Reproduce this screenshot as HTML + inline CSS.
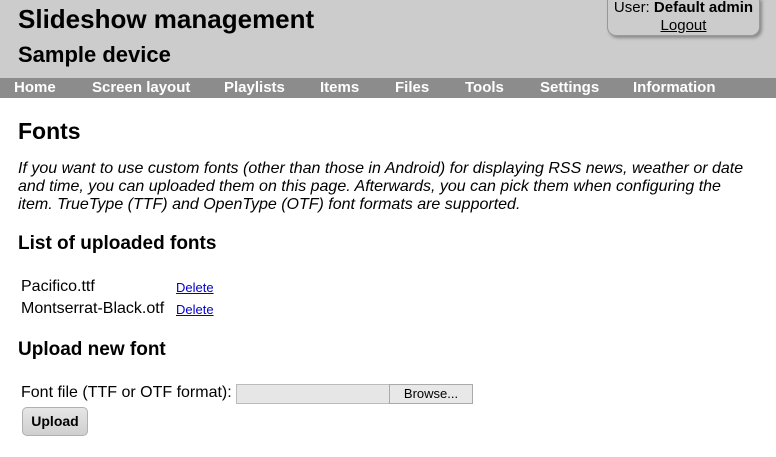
<!DOCTYPE html><html><head><style>
body{margin:0;width:776px;height:457px;overflow:hidden;background:#fff;font-family:"Liberation Sans",Arial,sans-serif;color:#000;position:relative}
.a{position:absolute;white-space:nowrap}
#hdr{position:absolute;left:0;top:0;width:776px;height:78px;background:#ccc}
#nav{position:absolute;left:0;top:78px;width:776px;height:20px;background:#8c8c8c}
#nav span{position:absolute;top:1px;color:#fff;font-weight:bold;font-size:15px;line-height:18px}
#user{position:absolute;left:607px;top:-2px;width:151px;height:37px;background:#ccc;border:1px solid #999;border-top:none;border-radius:0 0 9px 9px;box-shadow:2px 2px 3px #888;text-align:center;font-size:15px;line-height:18px}
p{margin:0}
</style></head><body>
<div id="hdr"></div>
<div class="a" style="left:18px;top:4px;font-size:26px;font-weight:bold">Slideshow management</div>
<div class="a" style="left:18px;top:42px;font-size:22px;font-weight:bold">Sample device</div>
<div id="user"><div style="margin-top:1px">User: <b>Default admin</b></div><div style="text-decoration:underline">Logout</div></div>
<div id="nav">
<span style="left:14px">Home</span><span style="left:92px">Screen layout</span><span style="left:224px">Playlists</span><span style="left:320px">Items</span><span style="left:395px">Files</span><span style="left:465px">Tools</span><span style="left:540px">Settings</span><span style="left:633px">Information</span>
</div>
<div class="a" style="left:18px;top:118px;font-size:23px;font-weight:bold">Fonts</div>
<div class="a" style="left:18px;top:160px;font-size:16px;font-style:italic;line-height:18px;width:730px;white-space:normal">If you want to use custom fonts (other than those in Android) for displaying RSS news, weather or date and time, you can uploaded them on this page. Afterwards, you can pick them when configuring the item. TrueType (TTF) and OpenType (OTF) font formats are supported.</div>
<div class="a" style="left:18px;top:233px;font-size:19px;font-weight:bold">List of uploaded fonts</div>
<div class="a" style="left:21px;top:278px;font-size:16px">Pacifico.ttf</div>
<div class="a" style="left:176px;top:280px;font-size:13px;color:#00c;text-decoration:underline">Delete</div>
<div class="a" style="left:21px;top:300px;font-size:16px">Montserrat-Black.otf</div>
<div class="a" style="left:176px;top:302px;font-size:13px;color:#00c;text-decoration:underline">Delete</div>
<div class="a" style="left:18px;top:339px;font-size:19px;font-weight:bold">Upload new font</div>
<div class="a" style="left:21px;top:384px;font-size:16px">Font file (TTF or OTF format):</div>
<div class="a" style="left:236px;top:384px;width:152px;height:18px;background:#e6e6e6;border:1px solid #bbb"></div>
<div class="a" style="left:389px;top:384px;width:82px;height:18px;background:#e8e8e8;border:1px solid #aaa;font-size:13px;text-align:center;line-height:18px">Browse...</div>
<div class="a" style="left:22px;top:407px;width:64px;height:27px;background:linear-gradient(#e6e6e6,#cfcfcf);border:1px solid #b0b0b0;border-radius:5px;font-size:14px;font-weight:bold;text-align:center;line-height:27px">Upload</div>
</body></html>
